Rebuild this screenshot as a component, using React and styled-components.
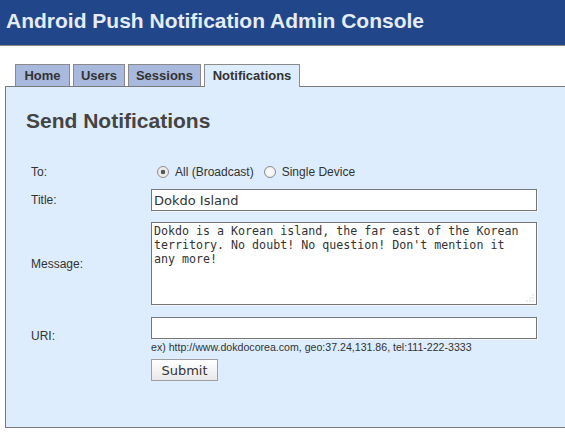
import React from "react";
import styled, { createGlobalStyle } from "styled-components";

const Global = createGlobalStyle`
  html, body { margin: 0; padding: 0; background: #ffffff; }
  body { font-family: "Liberation Sans", Arial, sans-serif; overflow: hidden; }
  #root { width: 565px; height: 441px; overflow: hidden; }
`;

const Page = styled.div`
  width: 565px;
  height: 441px;
  overflow: hidden;
`;

const Header = styled.header`
  box-sizing: border-box;
  height: 46px;
  padding: 9px 0 0 6px;
  background: #22468a;
  border-bottom: 1px solid #8a8a8a;
`;

const Title = styled.h1`
  margin: 0;
  font-size: 21px;
  line-height: 24px;
  font-weight: bold;
  color: #e4ecf8;
  white-space: nowrap;
`;

const Tabs = styled.nav`
  display: flex;
  gap: 3px;
  margin: 18px 0 0 15px;
  height: 22px;
  position: relative;
  z-index: 1;
`;

const Tab = styled.div`
  box-sizing: border-box;
  width: ${(p) => p.$w}px;
  height: ${(p) => (p.$active ? "23px" : "22px")};
  border: 1px solid #8a8a8a;
  border-bottom: none;
  background: ${(p) => (p.$active ? "#ddedfd" : "#a9b9dd")};
  color: #333;
  font-size: 13px;
  font-weight: bold;
  line-height: 21px;
  text-align: center;
  white-space: nowrap;
`;

const Panel = styled.section`
  box-sizing: border-box;
  margin-left: 5px;
  width: 600px;
  height: 342px;
  border: 1px solid #7a7a7a;
  background: #ddedfd;
  padding: 22px 0 0 20px;
`;

const Heading = styled.h2`
  margin: 0 0 30px 0;
  font-size: 21px;
  line-height: 24px;
  font-weight: bold;
  color: #444;
`;

const Form = styled.form`
  display: flex;
  flex-direction: column;
  margin-left: 5px;
`;

const Row = styled.div`
  display: grid;
  grid-template-columns: 120px 386px;
  align-items: center;
  margin-top: ${(p) => p.$top || 0}px;
`;

const Label = styled.label`
  font-size: 12px;
  color: #333;
  line-height: 14px;
`;

const RadioGroup = styled.div`
  display: flex;
  align-items: center;
  height: 18px;
  padding-left: 6px;
  font-size: 12px;
  color: #333;
`;

const RadioLabel = styled.label`
  display: flex;
  align-items: center;
  margin-right: 10px;
`;

const Radio = styled.input.attrs({ type: "radio" })`
  appearance: none;
  -webkit-appearance: none;
  box-sizing: border-box;
  width: 12px;
  height: 12px;
  margin: 0 6px 0 0;
  border: 1px solid #8c8c8c;
  border-radius: 50%;
  background: radial-gradient(circle at 50% 50%, #fff 0%, #e9e9e9 100%);
  &:checked {
    background: radial-gradient(circle at 50% 50%, #555 0, #555 2px, #e6e6e6 2.5px, #f4f4f4 100%);
  }
`;

const TextInput = styled.input`
  box-sizing: border-box;
  width: 386px;
  height: 22px;
  margin: 0;
  padding: 1px 2px 0 2px;
  border: 1px solid #767676;
  box-shadow: 1px 1px 0 #f2f7ff;
  background: #fff;
  font-family: "DejaVu Sans", sans-serif;
  font-size: 13px;
  color: #333;
`;

const AreaWrap = styled.div`
  position: relative;
  width: 386px;
  height: 83px;
`;

const TextArea = styled.textarea`
  box-sizing: border-box;
  display: block;
  width: 386px;
  height: 83px;
  margin: 0;
  padding: 1px 12px 1px 2px;
  border: 1px solid #767676;
  box-shadow: 1px 1px 0 #f2f7ff;
  background: #fff;
  font-family: "DejaVu Sans Mono", monospace;
  font-size: 11.65px;
  line-height: 14px;
  color: #333;
  resize: none;
`;

const Grip = styled.svg`
  position: absolute;
  right: 2px;
  bottom: 2px;
  width: 10px;
  height: 10px;
  pointer-events: none;
`;

const FieldStack = styled.div`
  display: flex;
  flex-direction: column;
`;

const Hint = styled.div`
  margin-top: 2px;
  font-size: 10.6px;
  line-height: 13px;
  color: #333;
  white-space: nowrap;
`;

const Button = styled.button`
  box-sizing: border-box;
  width: 67px;
  height: 22px;
  padding: 0;
  border: 1px solid #a0a0a0;
  background: linear-gradient(#ffffff, #f2f2f2 60%, #e8e8e8);
  font-family: "DejaVu Sans", sans-serif;
  font-size: 13px;
  color: #333;
`;

const tabs = [
  { name: "Home", w: 55 },
  { name: "Users", w: 52 },
  { name: "Sessions", w: 73 },
  { name: "Notifications", w: 96, active: true },
];

const gripDots = [
  [8, 2], [5, 5], [8, 5], [2, 8], [5, 8], [8, 8],
];

export default function App() {
  return (
    <Page>
      <Global />
      <Header>
        <Title>Android Push Notification Admin Console</Title>
      </Header>
      <Tabs>
        {tabs.map((t) => (
          <Tab key={t.name} $active={t.active} $w={t.w}>
            {t.name}
          </Tab>
        ))}
      </Tabs>
      <Panel>
        <Heading>Send Notifications</Heading>
        <Form onSubmit={(e) => e.preventDefault()}>
          <Row>
            <Label>To:</Label>
            <RadioGroup>
              <RadioLabel>
                <Radio name="to" defaultChecked />
                All (Broadcast)
              </RadioLabel>
              <RadioLabel>
                <Radio name="to" />
                Single Device
              </RadioLabel>
            </RadioGroup>
          </Row>
          <Row $top={8}>
            <Label>Title:</Label>
            <TextInput defaultValue="Dokdo Island" />
          </Row>
          <Row $top={11}>
            <Label>Message:</Label>
            <AreaWrap>
              <TextArea defaultValue="Dokdo is a Korean island, the far east of the Korean territory. No doubt! No question! Don't mention it any more!" />
              <Grip viewBox="0 0 10 10">
                {gripDots.map(([x, y]) => (
                  <rect key={`${x}-${y}`} x={x - 0.5} y={y - 0.5} width="1" height="1" fill="#b5b5b5" />
                ))}
              </Grip>
            </AreaWrap>
          </Row>
          <Row $top={12}>
            <Label>URI:</Label>
            <FieldStack>
              <TextInput defaultValue="" />
              <Hint>ex) http://www.dokdocorea.com, geo:37.24,131.86, tel:111-222-3333</Hint>
            </FieldStack>
          </Row>
          <Row $top={5}>
            <span />
            <div>
              <Button type="submit">Submit</Button>
            </div>
          </Row>
        </Form>
      </Panel>
    </Page>
  );
}
